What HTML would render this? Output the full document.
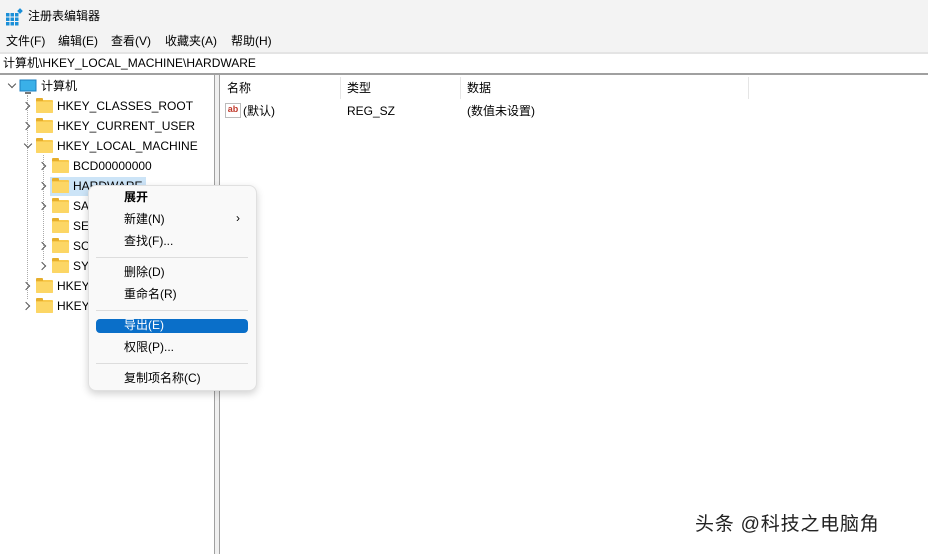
<!DOCTYPE html>
<html><head><meta charset="utf-8"><style>
*{margin:0;padding:0;box-sizing:border-box}
body{width:928px;height:554px;background:#fff;position:relative;overflow:hidden;font-family:"Liberation Sans","Noto Sans CJK SC",sans-serif;font-size:12px;line-height:14px;color:#000}
.a{position:absolute;white-space:nowrap}
.fd{position:absolute;width:17px;height:13px;background:#f8c94c;border-radius:1px}
.fd:before{content:"";position:absolute;left:0;top:-2px;width:7px;height:3px;background:#e6ae2c;border-radius:1px 1px 0 0}
.fd:after{content:"";position:absolute;left:0;top:2px;width:17px;height:11px;background:#fcd665;border-radius:1px}
.ch{position:absolute;width:6px;height:6px;border-right:1px solid #555;border-bottom:1px solid #555}
.r{transform:rotate(-45deg)}
.d{transform:rotate(45deg)}
.mi{position:absolute;left:124px;font-size:12px;line-height:14px}
.sep{position:absolute;left:96px;width:152px;height:1px;background:#ddd}
</style></head><body>
<div class="a" style="left:0;top:0;width:928px;height:32px;background:#f3f3f3"></div>
<svg class="a" style="left:6px;top:8px" width="18" height="18"><g fill="#1a8fd8"><rect x="0" y="5" width="3.5" height="3.5"/><rect x="4.5" y="5" width="3.5" height="3.5"/><rect x="9" y="5" width="3.5" height="3.5"/><rect x="0" y="9.5" width="3.5" height="3.5"/><rect x="4.5" y="9.5" width="3.5" height="3.5"/><rect x="9" y="9.5" width="3.5" height="3.5"/><rect x="0" y="14" width="3.5" height="3.5"/><rect x="4.5" y="14" width="3.5" height="3.5"/><rect x="9" y="14" width="3.5" height="3.5"/><rect x="12" y="1" width="4" height="4" transform="rotate(45 14 3)"/></g></svg>
<div class="a" style="left:28px;top:9px">注册表编辑器</div>
<div class="a" style="left:0;top:32px;width:928px;height:20px;background:#f3f3f3"></div>
<div class="a" style="left:6px;top:34px">文件(F)</div>
<div class="a" style="left:58px;top:34px">编辑(E)</div>
<div class="a" style="left:111px;top:34px">查看(V)</div>
<div class="a" style="left:165px;top:34px">收藏夹(A)</div>
<div class="a" style="left:231px;top:34px">帮助(H)</div>
<div class="a" style="left:0;top:52px;width:928px;height:2px;background:#e4e4e4"></div>
<div class="a" style="left:3px;top:56px">计算机\HKEY_LOCAL_MACHINE\HARDWARE</div>
<div class="a" style="left:0;top:73px;width:928px;height:2px;background:#a0a0a0"></div>
<div class="a" style="left:214px;top:75px;width:6px;height:479px;background:#f0f0f0;border-left:1px solid #a0a0a0;border-right:1px solid #a0a0a0"></div>

<div class="ch d" style="left:9px;top:81px"></div>
<svg class="a" style="left:19px;top:79px" width="18" height="16"><rect x="1" y="1" width="16" height="11" fill="#3ab0e8" stroke="#1c7fc0"/><rect x="6" y="13" width="6" height="2" fill="#777"/></svg>
<div class="a" style="left:41px;top:79px">计算机</div>
<div class="a" style="left:27px;top:95px;height:204px;border-left:1px dotted #aaa"></div>
<div class="a" style="left:43px;top:155px;height:105px;border-left:1px dotted #aaa"></div>

<div class="ch r" style="left:23px;top:103px"></div><div class="fd" style="left:36px;top:100px"></div><div class="a" style="left:57px;top:99px">HKEY_CLASSES_ROOT</div>
<div class="ch r" style="left:23px;top:123px"></div><div class="fd" style="left:36px;top:120px"></div><div class="a" style="left:57px;top:119px">HKEY_CURRENT_USER</div>
<div class="ch d" style="left:25px;top:141px"></div><div class="fd" style="left:36px;top:140px"></div><div class="a" style="left:57px;top:139px">HKEY_LOCAL_MACHINE</div>
<div class="ch r" style="left:39px;top:163px"></div><div class="fd" style="left:52px;top:160px"></div><div class="a" style="left:73px;top:159px">BCD00000000</div>
<div class="a" style="left:50px;top:177px;width:96px;height:19px;background:#cce4f7"></div>
<div class="ch r" style="left:39px;top:183px"></div><div class="fd" style="left:52px;top:180px"></div><div class="a" style="left:73px;top:179px">HARDWARE</div>
<div class="ch r" style="left:39px;top:203px"></div><div class="fd" style="left:52px;top:200px"></div><div class="a" style="left:73px;top:199px">SAM</div>
<div class="fd" style="left:52px;top:220px"></div><div class="a" style="left:73px;top:219px">SECURITY</div>
<div class="ch r" style="left:39px;top:243px"></div><div class="fd" style="left:52px;top:240px"></div><div class="a" style="left:73px;top:239px">SOFTWARE</div>
<div class="ch r" style="left:39px;top:263px"></div><div class="fd" style="left:52px;top:260px"></div><div class="a" style="left:73px;top:259px">SYSTEM</div>
<div class="ch r" style="left:23px;top:283px"></div><div class="fd" style="left:36px;top:280px"></div><div class="a" style="left:57px;top:279px">HKEY_USERS</div>
<div class="ch r" style="left:23px;top:303px"></div><div class="fd" style="left:36px;top:300px"></div><div class="a" style="left:57px;top:299px">HKEY_CURRENT_CONFIG</div>

<div class="a" style="left:227px;top:81px">名称</div>
<div class="a" style="left:347px;top:81px">类型</div>
<div class="a" style="left:467px;top:81px">数据</div>
<div class="a" style="left:340px;top:77px;width:1px;height:22px;background:#e5e5e5"></div>
<div class="a" style="left:460px;top:77px;width:1px;height:22px;background:#e5e5e5"></div>
<div class="a" style="left:748px;top:77px;width:1px;height:22px;background:#e5e5e5"></div>
<div class="a" style="left:225px;top:103px;width:16px;height:15px;border:1px solid #bbb;background:#fff;font-size:9px;font-weight:bold;color:#c0392b;line-height:11px;text-align:center">ab</div>
<div class="a" style="left:243px;top:104px">(默认)</div>
<div class="a" style="left:347px;top:104px">REG_SZ</div>
<div class="a" style="left:467px;top:104px">(数值未设置)</div>

<div class="a" style="left:88px;top:185px;width:169px;height:206px;background:#f9f9f9;border:1px solid #e0e0e0;border-radius:8px;box-shadow:0 3px 8px rgba(0,0,0,.18)"></div>
<div class="mi" style="top:190px;font-weight:bold">展开</div>
<div class="mi" style="top:212px">新建(N)</div>
<div class="a" style="left:236px;top:211px">›</div>
<div class="mi" style="top:234px">查找(F)...</div>
<div class="sep" style="top:257px"></div>
<div class="mi" style="top:265px">删除(D)</div>
<div class="mi" style="top:287px">重命名(R)</div>
<div class="sep" style="top:310px"></div>
<div class="a" style="left:96px;top:319px;width:152px;height:14px;background:#0a6fc9;border-radius:4px"></div>
<div class="mi" style="top:318px;color:#fff">导出(E)</div>
<div class="mi" style="top:340px">权限(P)...</div>
<div class="sep" style="top:363px"></div>
<div class="mi" style="top:371px">复制项名称(C)</div>

<div class="a" style="left:695px;top:513px;font-size:19px;line-height:24px;letter-spacing:0.8px;color:#222;text-shadow:1px 1px 1px #fff,-1px -1px 1px #fff">头条 @科技之电脑角</div>
</body></html>
